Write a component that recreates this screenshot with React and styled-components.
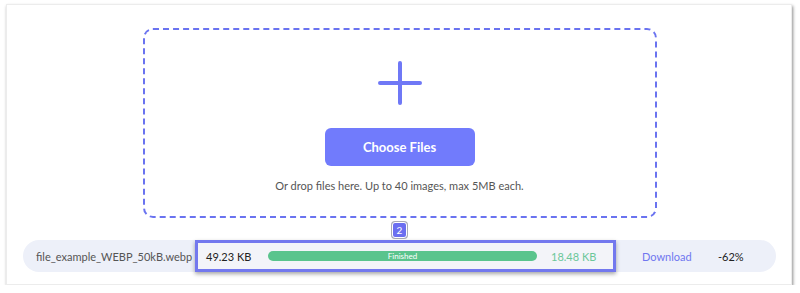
import React from "react";
import styled, { createGlobalStyle } from "styled-components";

const GlobalStyle = createGlobalStyle`
  html, body {
    margin: 0;
    padding: 0;
    background: #ffffff;
    font-family: Lato, "Open Sans", Arial, sans-serif;
  }
`;

export default function App() {
  return (
    <>
      <GlobalStyle />
      <Card>
        <DropZone>
          <PlusIcon viewBox="0 0 44 44">
            <path d="M22 2 V42 M2 22 H42" stroke="#6f78f6" strokeWidth="4" strokeLinecap="round" fill="none" />
          </PlusIcon>
          <ChooseButton>Choose Files</ChooseButton>
          <Hint>Or drop files here. Up to 40 images, max 5MB each.</Hint>
        </DropZone>
        <BadgeRow>
          <Badge>2</Badge>
        </BadgeRow>
        <FileRow>
          <FileName>file_example_WEBP_50kB.webp</FileName>
          <Highlight>
            <Size>49.23 KB</Size>
            <Progress>Finished</Progress>
            <Size $green>18.48 KB</Size>
          </Highlight>
          <DownloadLink>Download</DownloadLink>
          <Percent>-62%</Percent>
        </FileRow>
      </Card>
    </>
  );
}

const Card = styled.div`
  box-sizing: border-box;
  width: 786px;
  height: 281px;
  margin: 4px 0 0 6px;
  background: #ffffff;
  border: 1px solid #ececec;
  box-shadow: 1px 2px 3px rgba(0, 0, 0, 0.45);
  display: flex;
  flex-direction: column;
  align-items: center;
  padding: 23px 15px 0 16px;
`;

const DropZone = styled.div`
  box-sizing: border-box;
  width: 514px;
  height: 190px;
  border: 2px dashed #6a73f0;
  border-radius: 10px;
  display: flex;
  flex-direction: column;
  align-items: center;
  padding-top: 31px;
`;

const PlusIcon = styled.svg`
  width: 44px;
  height: 44px;
  display: block;
`;

const ChooseButton = styled.button`
  margin-top: 23px;
  width: 150px;
  height: 38px;
  border: none;
  border-radius: 6px;
  background: #717bfc;
  color: #ffffff;
  font-family: inherit;
  font-size: 13px;
  font-weight: 700;
  cursor: pointer;
`;

const Hint = styled.div`
  margin-top: 12px;
  font-size: 11px;
  color: #555555;
  line-height: 16px;
`;

const BadgeRow = styled.div`
  height: 22px;
  display: flex;
  justify-content: center;
  align-items: flex-start;
  padding-top: 4px;
  box-sizing: border-box;
`;

const Badge = styled.div`
  width: 13px;
  height: 14px;
  border-radius: 3px;
  background: #6b6ef0;
  border: 1px solid #ffffff;
  box-shadow: 0 0 0 1px #a9a9b8;
  color: #ffffff;
  font-size: 10px;
  line-height: 14px;
  text-align: center;
`;

const FileRow = styled.div`
  align-self: stretch;
  height: 32px;
  border-radius: 16px;
  background: #edf0f9;
  display: flex;
  align-items: center;
  padding-left: 13px;
  font-size: 11px;
`;

const FileName = styled.div`
  width: 159px;
  color: #555555;
  white-space: nowrap;
`;

const Highlight = styled.div`
  box-sizing: border-box;
  width: 421px;
  height: 32px;
  border: 3px solid #7378ee;
  background: #f3f4f9;
  box-shadow: 0 2px 4px rgba(0, 0, 0, 0.35);
  display: flex;
  align-items: center;
  padding: 0 8px;
`;

const Size = styled.div`
  width: ${(p) => (p.$green ? "auto" : "62px")};
  margin-left: ${(p) => (p.$green ? "14px" : "0")};
  color: ${(p) => (p.$green ? "#6cc79a" : "#222222")};
  white-space: nowrap;
`;

const Progress = styled.div`
  width: 269px;
  height: 10px;
  border-radius: 5px;
  background: #5ac48d;
  color: #ffffff;
  font-size: 8px;
  line-height: 10px;
  text-align: center;
`;

const DownloadLink = styled.a`
  width: 76px;
  margin-left: 26px;
  color: #7077f0;
  cursor: pointer;
`;

const Percent = styled.div`
  color: #222222;
`;
